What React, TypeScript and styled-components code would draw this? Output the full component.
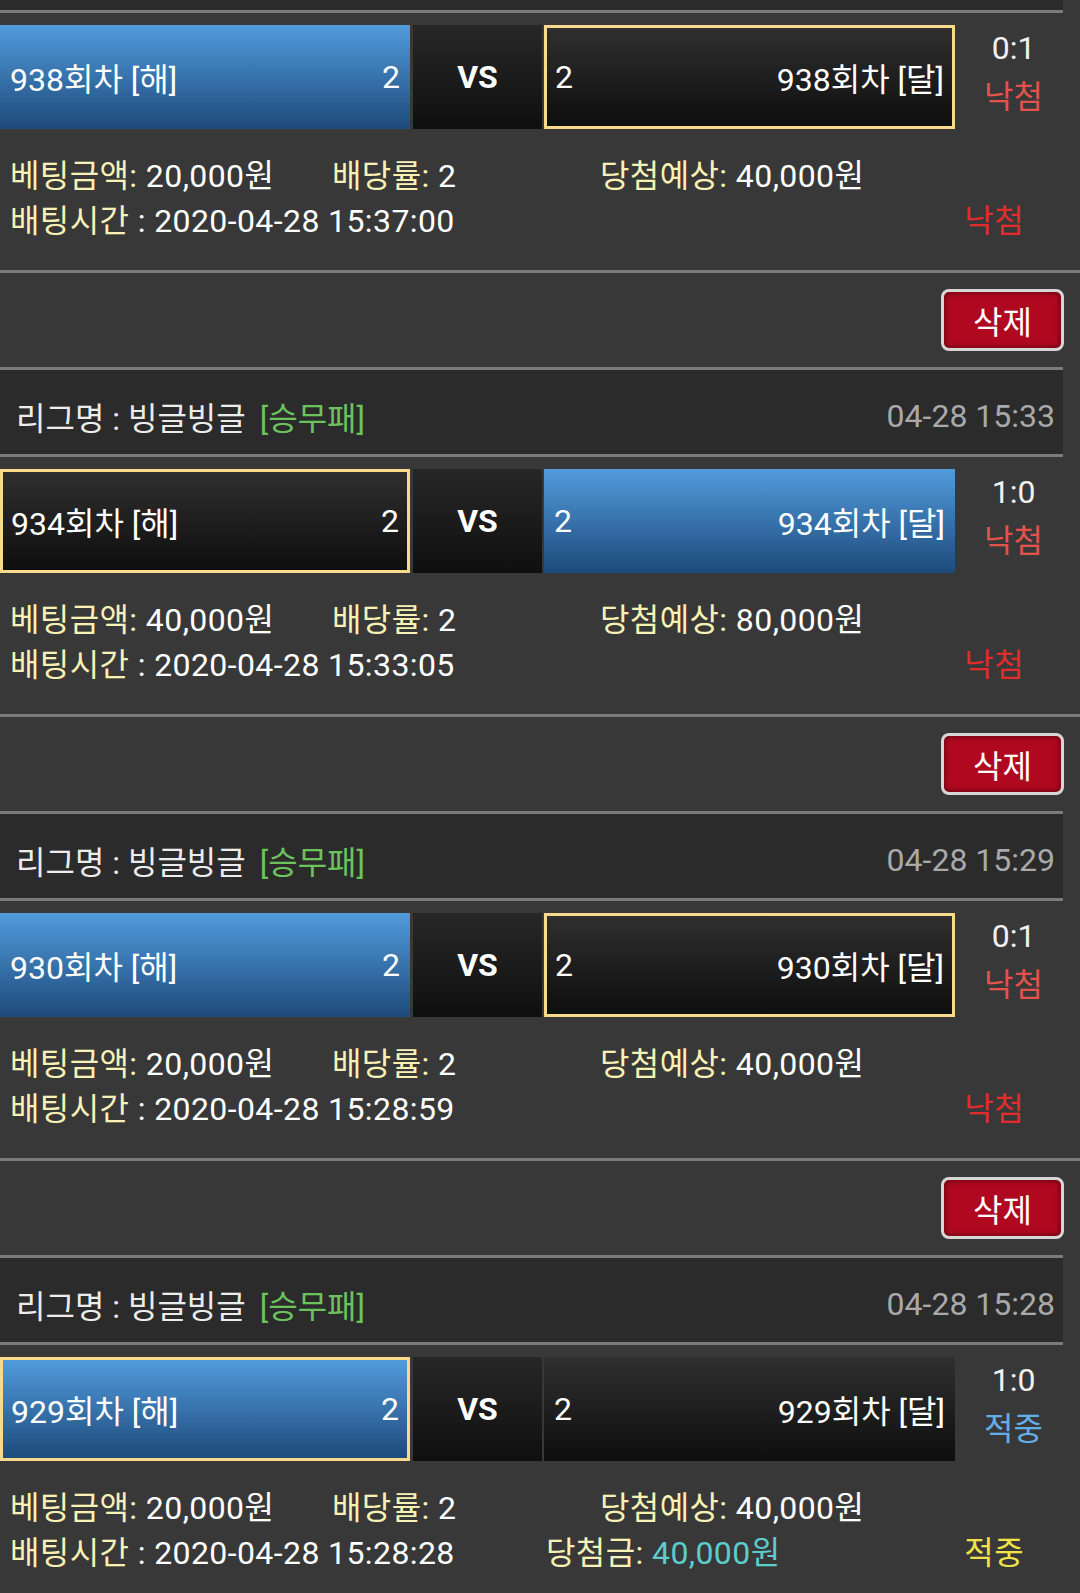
import React from "react";
import styled, { createGlobalStyle } from "styled-components";

const GlobalStyle = createGlobalStyle`
  html, body {
    margin: 0;
    padding: 0;
    background: #383838;
  }
  body {
    font-family: Roboto, "Noto Sans CJK KR", sans-serif;
    color: #f2f2f2;
    overflow: hidden;
  }
`;

type Bet = {
  date: string;
  round: number;
  homeWin: boolean;
  pick: "home" | "away";
  score: string;
  hit: boolean;
  amount: string;
  rate: string;
  expect: string;
  time: string;
  paid?: string;
};

const bets: Bet[] = [
  {
    date: "04-28 15:37",
    round: 938,
    homeWin: true,
    pick: "away",
    score: "0:1",
    hit: false,
    amount: "20,000원",
    rate: "2",
    expect: "40,000원",
    time: "2020-04-28 15:37:00",
  },
  {
    date: "04-28 15:33",
    round: 934,
    homeWin: false,
    pick: "home",
    score: "1:0",
    hit: false,
    amount: "40,000원",
    rate: "2",
    expect: "80,000원",
    time: "2020-04-28 15:33:05",
  },
  {
    date: "04-28 15:29",
    round: 930,
    homeWin: true,
    pick: "away",
    score: "0:1",
    hit: false,
    amount: "20,000원",
    rate: "2",
    expect: "40,000원",
    time: "2020-04-28 15:28:59",
  },
  {
    date: "04-28 15:28",
    round: 929,
    homeWin: true,
    pick: "home",
    score: "1:0",
    hit: true,
    amount: "20,000원",
    rate: "2",
    expect: "40,000원",
    time: "2020-04-28 15:28:28",
    paid: "40,000원",
  },
];

// the list is scrolled: only the bottom edge of the first league bar is visible
const BetCard = ({ bet, scrolled }: { bet: Bet; scrolled?: boolean }) => (
  <Item>
    {scrolled ? (
      <LeagueTail />
    ) : (
      <LeagueBar>
        <LeagueName>
          리그명 : 빙글빙글<LeagueTag>[승무패]</LeagueTag>
        </LeagueName>
        <LeagueDate>{bet.date}</LeagueDate>
      </LeagueBar>
    )}
    <MatchRow>
      <TeamBox $win={bet.homeWin} $picked={bet.pick === "home"}>
        <span>{bet.round}회차 [해]</span>
        <span>2</span>
      </TeamBox>
      <VsBox>VS</VsBox>
      <TeamBox $win={!bet.homeWin} $picked={bet.pick === "away"}>
        <span>2</span>
        <span>{bet.round}회차 [달]</span>
      </TeamBox>
      <ResultCell>
        <Score>{bet.score}</Score>
        <ResultText $hit={bet.hit}>{bet.hit ? "적중" : "낙첨"}</ResultText>
      </ResultCell>
    </MatchRow>
    <InfoBlock>
      <InfoLine>
        <InfoCell $width={322}>
          <Label>베팅금액:</Label> {bet.amount}
        </InfoCell>
        <InfoCell $width={268}>
          <Label>배당률:</Label> {bet.rate}
        </InfoCell>
        <InfoCell>
          <Label>당첨예상:</Label> {bet.expect}
        </InfoCell>
      </InfoLine>
      <InfoLine>
        <InfoCell $width={536}>
          <Label>배팅시간</Label> : {bet.time}
        </InfoCell>
        <InfoCell $grow>
          {bet.paid && (
            <>
              <Label>당첨금:</Label> <PaidValue>{bet.paid}</PaidValue>
            </>
          )}
        </InfoCell>
        <StatusText $hit={bet.hit}>{bet.hit ? "적중" : "낙첨"}</StatusText>
      </InfoLine>
    </InfoBlock>
    <Divider />
    <DeleteRow>
      <DeleteButton>삭제</DeleteButton>
    </DeleteRow>
  </Item>
);

export default function App() {
  return (
    <>
      <GlobalStyle />
      <List>
        {bets.map((bet, idx) => (
          <BetCard key={bet.round} bet={bet} scrolled={idx === 0} />
        ))}
      </List>
    </>
  );
}

const List = styled.div`
  display: flex;
  flex-direction: column;
  width: 1080px;
`;

const Item = styled.div`
  display: flex;
  flex-direction: column;
`;

const LeagueBar = styled.div`
  display: flex;
  align-items: center;
  justify-content: space-between;
  box-sizing: border-box;
  width: 1063px;
  height: 90px;
  padding: 8px 8px 0 16px;
  background: #2b2b2b;
  border-top: 3px solid #7b7b7b;
  border-bottom: 3px solid #7b7b7b;
  font-size: 32px;
`;

const LeagueTail = styled.div`
  width: 1063px;
  height: 10px;
  background: #2b2b2b;
  border-bottom: 3px solid #7b7b7b;
`;

const LeagueName = styled.div`
  color: #ececec;
`;

const LeagueTag = styled.span`
  margin-left: 14px;
  color: #6cc25d;
`;

const LeagueDate = styled.div`
  color: #a9a9a9;
`;

const MatchRow = styled.div`
  display: flex;
  align-items: stretch;
  height: 104px;
  margin-top: 12px;
  font-size: 32px;
  color: #ffffff;
`;

const TeamBox = styled.div<{ $win: boolean; $picked: boolean }>`
  display: flex;
  align-items: center;
  justify-content: space-between;
  box-sizing: border-box;
  width: 411px;
  padding: 0 ${p => (p.$picked ? 8 : 10)}px;
  border: ${p => (p.$picked ? "3px solid #f8da8c" : "none")};
  background: ${p =>
    p.$win
      ? "linear-gradient(to bottom, #519bdc, #1d4a7b)"
      : "linear-gradient(to bottom, #2f2f2f, #0e0e0e)"};

  &:first-child {
    width: 410px;
  }
`;

const VsBox = styled.div`
  display: flex;
  align-items: center;
  justify-content: center;
  width: 129px;
  margin: 0 2px 0 3px;
  background: linear-gradient(to bottom, #272727, #0f0f0f);
  font-weight: 700;
  font-size: 32px;
`;

const ResultCell = styled.div`
  flex: 1;
  display: flex;
  flex-direction: column;
  align-items: center;
  justify-content: center;
  padding: 0 8px 8px 0;
  line-height: 49px;
  font-size: 32px;
`;

const Score = styled.div`
  color: #f1f1f1;
`;

const ResultText = styled.div<{ $hit: boolean }>`
  color: ${p => (p.$hit ? "#64aee7" : "#e4524c")};
`;

const InfoBlock = styled.div`
  display: flex;
  flex-direction: column;
  box-sizing: border-box;
  height: 141px;
  padding: 25px 0 0 10px;
  font-size: 32px;
  line-height: 45px;
  letter-spacing: 0.4px;
  color: #ffffff;
`;

const InfoLine = styled.div`
  display: flex;
  white-space: nowrap;
`;

const InfoCell = styled.div<{ $width?: number; $grow?: boolean }>`
  width: ${p => (p.$width ? `${p.$width}px` : "auto")};
  flex: ${p => (p.$grow ? 1 : "none")};
`;

const Label = styled.span`
  color: #f8f1b6;
`;

const PaidValue = styled.span`
  color: #5ccccc;
`;

const StatusText = styled.div<{ $hit: boolean }>`
  margin-right: 56px;
  color: ${p => (p.$hit ? "#f1e24a" : "#e02c2c")};
`;

const Divider = styled.div`
  height: 3px;
  background: #7b7b7b;
`;

const DeleteRow = styled.div`
  display: flex;
  justify-content: flex-end;
  box-sizing: border-box;
  height: 94px;
  padding: 16px 16px 16px 0;
`;

const DeleteButton = styled.button`
  box-sizing: border-box;
  width: 123px;
  height: 62px;
  padding: 0;
  border: 3px solid #d6d6d6;
  border-radius: 8px;
  background: #b0081f;
  box-shadow: inset 0 0 6px rgba(0, 0, 0, 0.55);
  color: #ffffff;
  font-family: Roboto, "Noto Sans CJK KR", sans-serif;
  font-size: 32px;
`;
